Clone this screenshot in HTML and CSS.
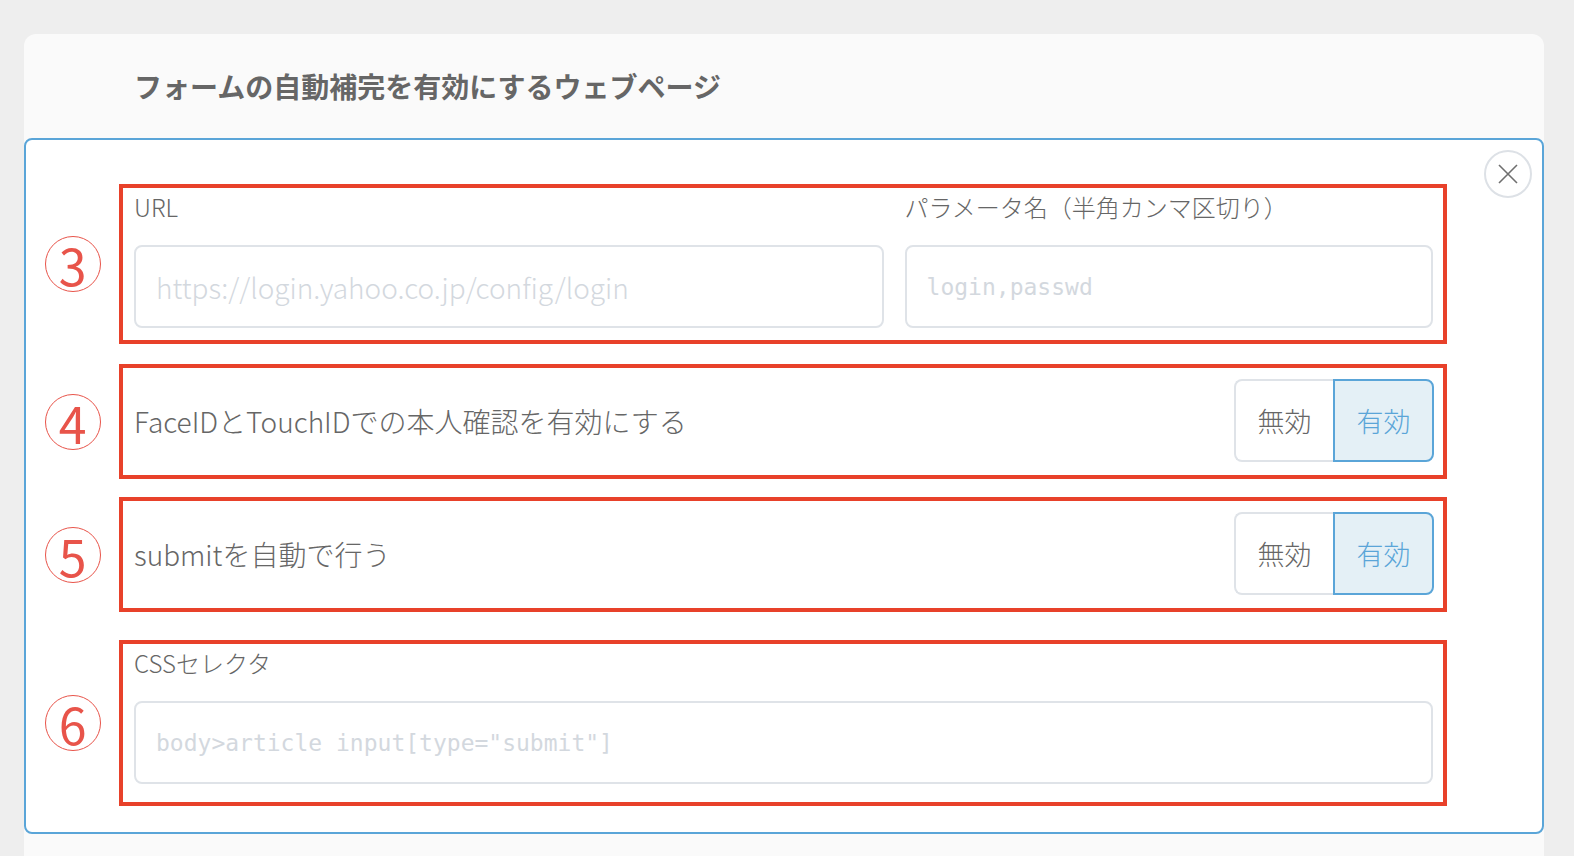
FILE: index.html
```html
<!DOCTYPE html>
<html lang="ja">
<head>
<meta charset="UTF-8">
<meta name="viewport" content="width=device-width, initial-scale=1.0">
<title>フォームの自動補完を有効にするウェブページ</title>
<link rel="stylesheet" href="styles.css">
</head>
<body>

<div class="card">
  <div class="card-header">
    <h1 class="card-title">フォームの自動補完を有効にするウェブページ</h1>
  </div>

  <div class="panel">
    <button class="close-btn" type="button" aria-label="閉じる">
      <svg width="20" height="20" viewBox="0 0 20 20">
        <path d="M1 1 L19 19 M19 1 L1 19" stroke="#6f6f6f" stroke-width="1.6" fill="none"/>
      </svg>
    </button>

    <div class="row row-url">
      <div class="num-col"><span class="num">3</span></div>
      <div class="box box-fields">
        <div class="field-grid">
          <div class="field">
            <label class="field-label">URL</label>
            <input class="text-input" type="text" placeholder="https://login.yahoo.co.jp/config/login">
          </div>
          <div class="field">
            <label class="field-label">パラメータ名（半角カンマ区切り）</label>
            <input class="text-input mono" type="text" placeholder="login,passwd">
          </div>
        </div>
      </div>
    </div>

    <div class="row row-face">
      <div class="num-col"><span class="num">4</span></div>
      <div class="box box-switch">
        <span class="switch-text">FaceIDとTouchIDでの本人確認を有効にする</span>
        <div class="toggle">
          <span class="opt opt-off">無効</span>
          <span class="opt opt-on">有効</span>
        </div>
      </div>
    </div>

    <div class="row row-submit">
      <div class="num-col"><span class="num">5</span></div>
      <div class="box box-switch">
        <span class="switch-text">submitを自動で行う</span>
        <div class="toggle">
          <span class="opt opt-off">無効</span>
          <span class="opt opt-on">有効</span>
        </div>
      </div>
    </div>

    <div class="row row-css">
      <div class="num-col"><span class="num">6</span></div>
      <div class="box box-fields box-css">
        <div class="field">
          <label class="field-label">CSSセレクタ</label>
          <input class="text-input mono" type="text" placeholder='body>article input[type="submit"]'>
        </div>
      </div>
    </div>
  </div>
</div>

</body>
</html>
```

FILE: styles.css
```css
body {
  margin: 0;
  padding: 0;
  background-color: #eeeeee;
  font-family: "Noto Sans CJK JP", "Noto Sans", sans-serif;
  font-weight: 300;
  color: #666;
}
.card {
  margin: 34px 30px 0 24px;
  background-color: #fafafa;
  border-radius: 12px 12px 0 0;
  padding-bottom: 60px;
}
.card-header {
  height: 104px;
  display: flex;
  align-items: center;
  padding-left: 110px;
}
.card-title {
  margin: 0;
  font-size: 28px;
  font-weight: bold;
  color: #666;
}
.panel {
  position: relative;
  background-color: #fff;
  border: 2px solid #5aa5d8;
  border-radius: 8px;
  padding: 44px 95px 26px 0;
}
.close-btn {
  position: absolute;
  top: 10px;
  right: 10px;
  width: 48px;
  height: 48px;
  border: 2px solid #dde1e6;
  border-radius: 50%;
  background-color: #fff;
  display: flex;
  align-items: center;
  justify-content: center;
  padding: 0;
  cursor: pointer;
}
.row {
  display: flex;
  align-items: center;
}
.row-face {
  margin-top: 20px;
}
.row-submit {
  margin-top: 18px;
}
.row-css {
  margin-top: 28px;
}
.num-col {
  width: 93px;
  display: flex;
  justify-content: center;
}
.num {
  width: 54px;
  height: 54px;
  border: 1.5px solid #e8544a;
  border-radius: 50%;
  color: #e8544a;
  font-size: 50px;
  font-weight: 400;
  line-height: 1;
  display: flex;
  align-items: center;
  justify-content: center;
}
.box {
  flex: 1;
  border: 4px solid #e8412a;
}
.box-fields {
  padding: 4px 10px 12px 11px;
}
.box-css {
  padding-bottom: 18px;
}
.field-grid {
  display: grid;
  grid-template-columns: 749fr 528fr;
  gap: 21px;
}
.field {
  display: flex;
  flex-direction: column;
}
.field-label {
  font-size: 24px;
  line-height: 30px;
  color: #666;
  margin-bottom: 23px;
}
.text-input {
  box-sizing: border-box;
  height: 83px;
  width: 100%;
  border: 2px solid #dfe3e8;
  border-radius: 8px;
  padding: 0 20px;
  font-family: "Noto Sans CJK JP", "Noto Sans", sans-serif;
  font-weight: 300;
  font-size: 28px;
  color: #555;
  background-color: #fff;
}
.text-input::placeholder {
  color: #d3d8de;
}
.text-input.mono {
  font-family: "DejaVu Sans Mono", "Liberation Mono", monospace;
  font-weight: normal;
  font-size: 23px;
}
.box-switch {
  display: flex;
  align-items: center;
  justify-content: space-between;
  padding: 11px 9px 13px 11px;
}
.switch-text {
  font-size: 28px;
  color: #666;
}
.toggle {
  display: flex;
  height: 83px;
}
.opt {
  box-sizing: border-box;
  display: flex;
  align-items: center;
  justify-content: center;
  font-size: 27px;
}
.opt-off {
  width: 99px;
  border: 2px solid #dfe3e8;
  border-right: none;
  border-radius: 8px 0 0 8px;
  color: #666;
}
.opt-on {
  width: 101px;
  border: 2px solid #5aa5d8;
  border-radius: 0 8px 8px 0;
  background-color: #e4f0f6;
  color: #5aa5d8;
}
```
